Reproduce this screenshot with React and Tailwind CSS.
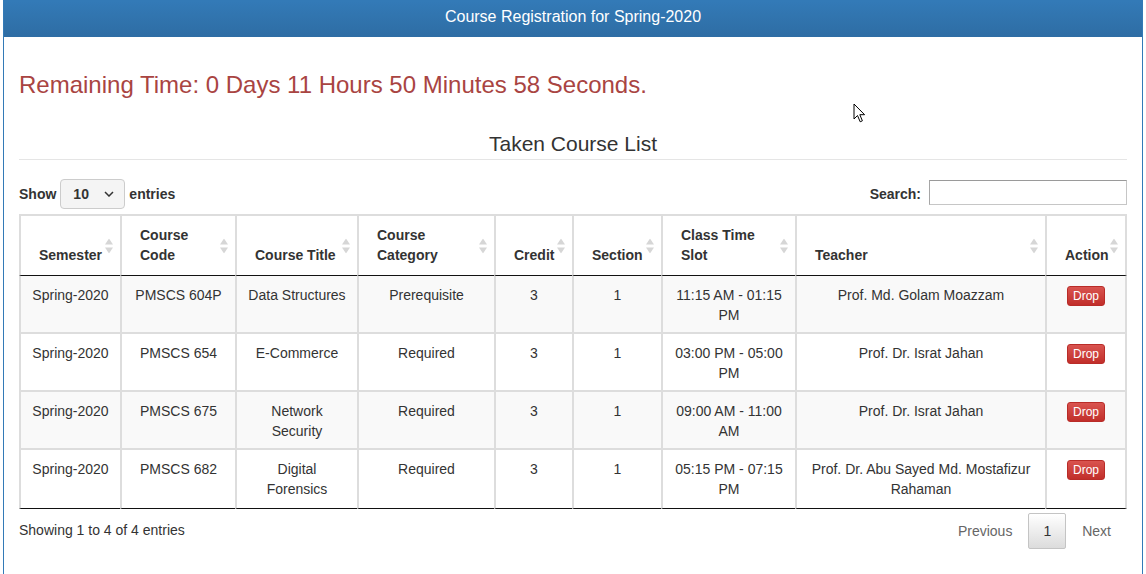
const courses = [
  {
    semester: "Spring-2020",
    code: "PMSCS 604P",
    title: "Data Structures",
    category: "Prerequisite",
    credit: 3,
    section: 1,
    slot: "11:15 AM - 01:15 PM",
    teacher: "Prof. Md. Golam Moazzam",
  },
  {
    semester: "Spring-2020",
    code: "PMSCS 654",
    title: "E-Commerce",
    category: "Required",
    credit: 3,
    section: 1,
    slot: "03:00 PM - 05:00 PM",
    teacher: "Prof. Dr. Israt Jahan",
  },
  {
    semester: "Spring-2020",
    code: "PMSCS 675",
    title: "Network Security",
    category: "Required",
    credit: 3,
    section: 1,
    slot: "09:00 AM - 11:00 AM",
    teacher: "Prof. Dr. Israt Jahan",
  },
  {
    semester: "Spring-2020",
    code: "PMSCS 682",
    title: "Digital Forensics",
    category: "Required",
    credit: 3,
    section: 1,
    slot: "05:15 PM - 07:15 PM",
    teacher: "Prof. Dr. Abu Sayed Md. Mostafizur Rahaman",
  },
];

const headers = [
  "Semester",
  "Course Code",
  "Course Title",
  "Course Category",
  "Credit",
  "Section",
  "Class Time Slot",
  "Teacher",
  "Action",
];

const widths = [101, 115, 122, 137, 78, 89, 134, 250, 82];

function SortIcon() {
  return (
    <svg
      width="8"
      height="15"
      viewBox="0 0 8 15"
      className="absolute right-[7px] top-1/2 -translate-y-1/2"
    >
      <path d="M4 0 L8 6 L0 6 Z" fill="#d6d6d6" />
      <path d="M4 15 L8 9 L0 9 Z" fill="#d6d6d6" />
    </svg>
  );
}

function Cursor() {
  return (
    <svg
      width="14"
      height="21"
      viewBox="0 0 14 21"
      className="absolute left-[853px] top-[103px]"
    >
      <path
        d="M1 1 L1 16 L4.5 12.5 L7.2 18.8 L9.4 17.8 L6.8 11.7 L11.6 11.7 Z"
        fill="#fff"
        stroke="#000"
        strokeWidth="1"
        strokeLinejoin="round"
      />
    </svg>
  );
}

export default function App() {
  return (
    <div className="relative min-h-[574px] bg-white px-[3px] font-['Liberation_Sans',Arial,sans-serif] text-[14px] leading-[20px] text-[#333]">
      <div className="min-h-[600px] border border-[#337ab7]">
        <div className="flex h-[36px] items-center justify-center bg-gradient-to-b from-[#337ab7] to-[#2e6da4] pb-[4px] text-[16px] text-white">
          Course Registration for Spring-2020
        </div>

        <div className="px-[15px] pt-[15px]">
          <h3 className="mt-[20px] text-[24px] leading-[26px] text-[#a94442]">
            Remaining Time: 0 Days 11 Hours 50 Minutes 58 Seconds.
          </h3>

          <div className="mt-[31px] h-[31px] border-b border-[#e5e5e5] text-center text-[21px] leading-[30px] text-[#333]">
            Taken Course List
          </div>

          <div className="mt-[19px] flex h-[30px] items-center justify-between">
            <div className="flex items-center gap-[4px] font-bold">
              <span>Show</span>
              <div className="flex h-[30px] w-[65px] items-center justify-between rounded-[4px] border border-[#ccc] bg-[#f4f4f4] pl-[12px] pr-[10px]">
                <span>10</span>
                <svg width="10" height="6" viewBox="0 0 10 6">
                  <path
                    d="M1 1 L5 5 L9 1"
                    fill="none"
                    stroke="#333"
                    strokeWidth="1.5"
                  />
                </svg>
              </div>
              <span>entries</span>
            </div>
            <div className="flex items-center gap-[8px] font-bold">
              <span>Search:</span>
              <div className="mb-[4px] h-[25px] w-[198px] border border-[#c6c6c6] border-t-[#9a9a9a] border-l-[#a6a6a6] bg-white" />
            </div>
          </div>

          <table className="mt-[5px] w-[1108px] table-fixed border-separate border-spacing-0">
            <colgroup>
              {widths.map((w, i) => (
                <col key={i} style={{ width: w }} />
              ))}
            </colgroup>
            <thead>
              <tr>
                {headers.map((h, i) => (
                  <th
                    key={h}
                    className={`relative border-t-2 border-l-2 border-b border-[#ddd] border-b-[#111] pt-[9px] pb-[10px] pl-[18px] pr-[18px] text-left align-bottom font-bold ${
                      i === 0 ? "border-l pl-[18px]" : ""
                    } ${i === headers.length - 1 ? "border-r-2" : ""}`}
                  >
                    <div className="min-h-[40px] flex items-end">{h}</div>
                    <SortIcon />
                  </th>
                ))}
              </tr>
            </thead>
            <tbody>
              {courses.map((c, r) => {
                const last = r === courses.length - 1;
                const cells = [
                  c.semester,
                  c.code,
                  c.title,
                  c.category,
                  c.credit,
                  c.section,
                  c.slot,
                  c.teacher,
                ];
                return (
                  <tr key={c.code} className={r % 2 === 0 ? "bg-[#f9f9f9]" : "bg-white"}>
                    {cells.map((v, i) => (
                      <td
                        key={i}
                        className={`border-l-2 border-[#ddd] px-[10px] pt-[9px] text-center align-top ${
                          i === 0 ? "border-l" : ""
                        } ${
                          last ? "border-b border-b-[#111] pb-[9px]" : "border-b-2 pb-[7px]"
                        }`}
                      >
                        <div className="min-h-[40px]">{v}</div>
                      </td>
                    ))}
                    <td
                      className={`border-l-2 border-r-2 border-[#ddd] pt-[9px] text-center align-top ${
                        last ? "border-b border-b-[#111] pb-[9px]" : "border-b-2 pb-[7px]"
                      }`}
                    >
                      <button className="rounded-[3px] border border-[#b92c28] bg-gradient-to-b from-[#d9534f] to-[#c12e2a] px-[5px] text-[12px] leading-[18px] text-white">
                        Drop
                      </button>
                    </td>
                  </tr>
                );
              })}
            </tbody>
          </table>

          <div className="mt-[4px] flex items-center justify-between">
            <div className="-mt-[2px]">Showing 1 to 4 of 4 entries</div>
            <div className="mr-[2px] flex items-center gap-[2px]">
              <span className="px-[14px] py-[8px] text-[#666]">Previous</span>
              <span className="rounded-[2px] border border-[#c4c4c4] bg-gradient-to-b from-white to-[#dcdcdc] px-[14px] py-[7px] text-[#333]">
                1
              </span>
              <span className="px-[14px] py-[8px] text-[#666]">Next</span>
            </div>
          </div>
        </div>
      </div>
      <Cursor />
    </div>
  );
}
